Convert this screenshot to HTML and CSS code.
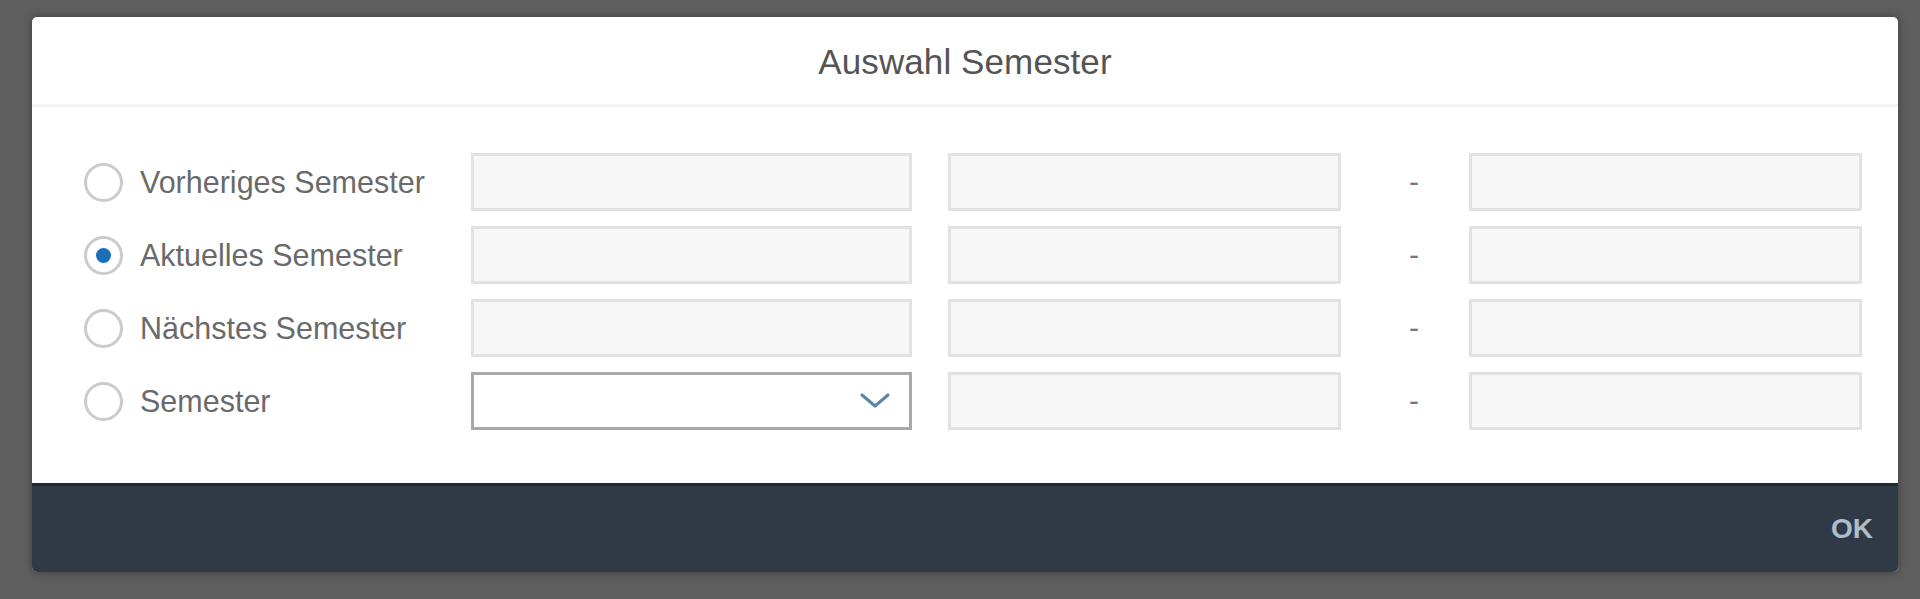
FILE: index.html
```html
<!DOCTYPE html>
<html lang="de">
<head>
<meta charset="utf-8">
<title>Auswahl Semester</title>
<link rel="stylesheet" href="styles.css">
</head>
<body>
<div class="dialog">
  <header class="dialog-header">
    <h1 class="dialog-title">Auswahl Semester</h1>
  </header>
  <div class="dialog-body">
    <label class="option"><span class="radio"></span><span class="option-text">Vorheriges Semester</span></label>
    <div class="field field-wide"></div>
    <div class="field"></div>
    <span class="dash">-</span>
    <div class="field"></div>

    <label class="option"><span class="radio radio-on"></span><span class="option-text">Aktuelles Semester</span></label>
    <div class="field field-wide"></div>
    <div class="field"></div>
    <span class="dash">-</span>
    <div class="field"></div>

    <label class="option"><span class="radio"></span><span class="option-text">Nächstes Semester</span></label>
    <div class="field field-wide"></div>
    <div class="field"></div>
    <span class="dash">-</span>
    <div class="field"></div>

    <label class="option"><span class="radio"></span><span class="option-text">Semester</span></label>
    <div class="select">
      <svg class="chevron" viewBox="0 0 32 18" width="32" height="18" aria-hidden="true">
        <path d="M3 3 L16 14 L29 3" fill="none" stroke="#5f84a8" stroke-width="3.2" stroke-linecap="round" stroke-linejoin="round"/>
      </svg>
    </div>
    <div class="field"></div>
    <span class="dash">-</span>
    <div class="field"></div>
  </div>
  <footer class="dialog-footer">
    <button class="ok-btn" type="button">OK</button>
  </footer>
</div>
</body>
</html>
```

FILE: styles.css
```css
html, body {
  margin: 0;
  padding: 0;
}

body {
  background: #5e5e5e;
  width: 1920px;
  height: 599px;
  overflow: hidden;
  font-family: "Liberation Sans", Arial, sans-serif;
  box-sizing: border-box;
  padding: 17px 22px 0 32px;
}

.dialog {
  width: 1866px;
  background: #ffffff;
  border-radius: 5px;
  box-shadow: 0 0 8px rgba(0, 0, 0, 0.35);
  overflow: hidden;
  display: flex;
  flex-direction: column;
}

.dialog-header {
  height: 87px;
  display: flex;
  align-items: center;
  justify-content: center;
  border-bottom: 3px solid #f3f3f3;
}

.dialog-title {
  margin: 0;
  font-size: 35px;
  font-weight: normal;
  color: #545454;
  letter-spacing: 0.1px;
  padding-top: 2px;
}

.dialog-body {
  display: grid;
  grid-template-columns: 351px 441px 393px 56px 393px;
  grid-auto-rows: 58px;
  column-gap: 36px;
  row-gap: 15px;
  padding: 46px 36px 53px 52px;
  align-items: center;
}

.option {
  display: flex;
  align-items: center;
  gap: 17px;
}

.radio {
  width: 33px;
  height: 33px;
  border: 3px solid #cbcbcb;
  border-radius: 50%;
  box-sizing: content-box;
  display: flex;
  align-items: center;
  justify-content: center;
  flex: none;
}

.radio-on::after {
  content: "";
  width: 15px;
  height: 15px;
  border-radius: 50%;
  background: #1a6fba;
}

.option-text {
  font-size: 30.5px;
  color: #6a6a6a;
  white-space: nowrap;
}

.field {
  height: 58px;
  box-sizing: border-box;
  background: #f7f7f7;
  border: 3px solid #e2e2e2;
}

.select {
  height: 58px;
  box-sizing: border-box;
  background: #ffffff;
  border: 3px solid #a9a9a9;
  display: flex;
  align-items: center;
  justify-content: flex-end;
  padding-right: 18px;
}

.chevron {
  display: block;
}

.dash {
  font-size: 30px;
  color: #777777;
  text-align: center;
  padding-left: 18px;
}

.dialog-footer {
  height: 86px;
  background: #2f3a46;
  border-top: 3px solid #1c2a38;
  display: flex;
  align-items: center;
  justify-content: flex-end;
  padding-right: 25px;
}

.ok-btn {
  background: transparent;
  border: 0;
  padding: 0;
  font-family: "Liberation Sans", Arial, sans-serif;
  font-weight: bold;
  font-size: 28px;
  color: #aebdcc;
  cursor: pointer;
}
```
